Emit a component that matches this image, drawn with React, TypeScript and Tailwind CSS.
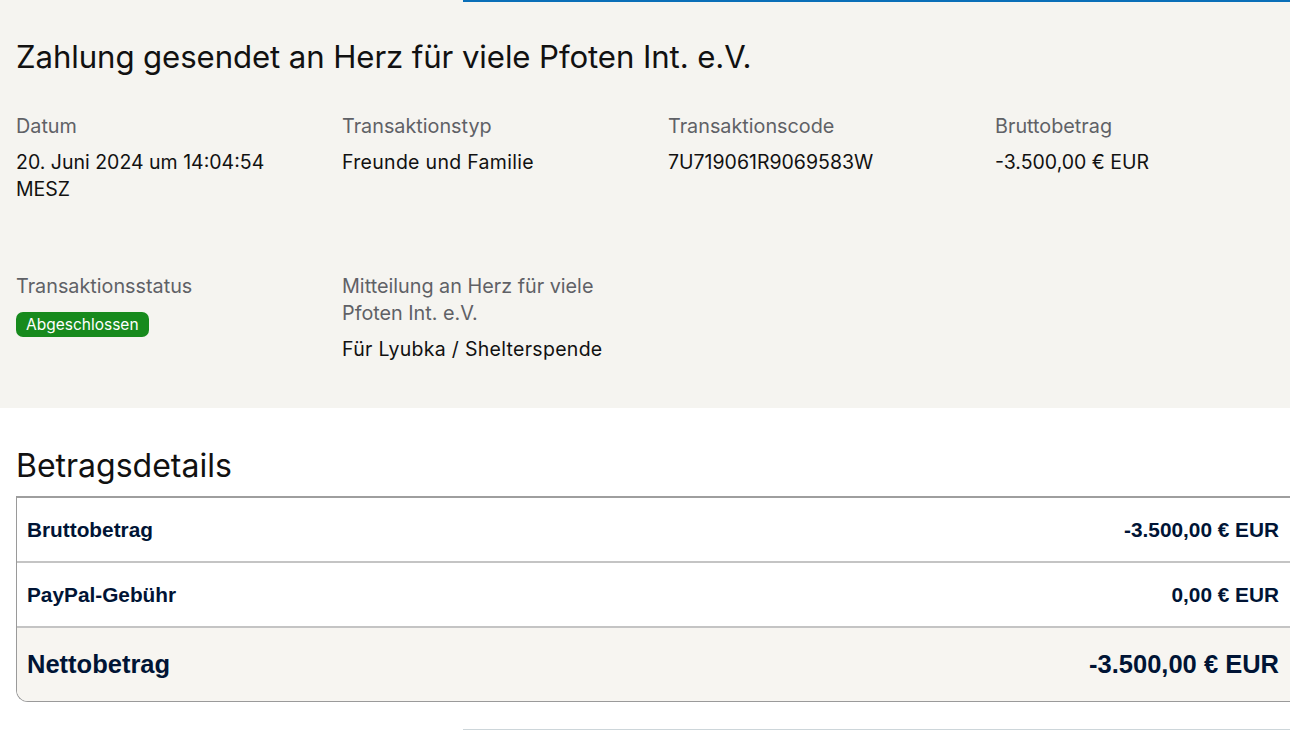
import React from "react";

const sans = { fontFamily: "Inter, 'Liberation Sans', sans-serif" };
const arial = { fontFamily: "'Liberation Sans', Arial, sans-serif" };

function Field({ label, children }: { label: React.ReactNode; children: React.ReactNode }) {
  return (
    <div className="flex flex-col">
      <div className="text-[19.8px] leading-[27px] text-[#5f6166] mb-[9px]">{label}</div>
      <div className="text-[19.5px] leading-[27px] text-[#111111]">{children}</div>
    </div>
  );
}

export default function App() {
  return (
    <div className="w-[1290px] h-[743px] bg-white overflow-hidden flex flex-col" style={sans}>
      <section className="bg-[#f5f4f0] h-[408px] flex flex-col shrink-0">
        <div className="flex h-[2px]">
          <div className="w-[463px]" />
          <div className="flex-1 bg-[#0a6fb8]" />
        </div>
        <div className="px-4 pt-[37px]">
          <h1 className="text-[31.2px] leading-[36px] text-[#111111] font-normal tracking-[-0.1px]">
            Zahlung gesendet an Herz für viele Pfoten Int. e.V.
          </h1>
          <div className="grid grid-cols-[326px_326px_327px_300px] mt-[38px] gap-y-[70px]">
            <Field label="Datum">
              20. Juni 2024 um 14:04:54
              <br />
              MESZ
            </Field>
            <Field label="Transaktionstyp">
              <span className="tracking-[0.3px]">Freunde und Familie</span>
            </Field>
            <Field label="Transaktionscode">7U719061R9069583W</Field>
            <Field label="Bruttobetrag">-3.500,00 € EUR</Field>
            <div className="flex flex-col">
              <div className="text-[19.8px] leading-[27px] text-[#5f6166]">Transaktionsstatus</div>
              <div className="mt-[12px]">
                <span className="inline-block bg-[#178a1d] text-white text-[15.5px] leading-[25px] px-[10px] rounded-[7px]">
                  Abgeschlossen
                </span>
              </div>
            </div>
            <Field
              label={
                <>
                  Mitteilung an Herz für viele
                  <br />
                  Pfoten Int. e.V.
                </>
              }
            >
              <span className="tracking-[0.3px]">Für Lyubka / Shelterspende</span>
            </Field>
          </div>
        </div>
      </section>
      <section className="px-4 pt-[40px]">
        <h2 className="text-[32px] leading-[36px] text-[#111111] font-normal">Betragsdetails</h2>
        <div
          className="mt-[12px] w-[1274px] border-l border-b border-[#9a9a9a] border-t-2 border-t-[#9e9e9e] rounded-bl-[12px] overflow-hidden text-[#001435] font-bold"
          style={arial}
        >
          <div className="h-[65px] flex items-center justify-between pl-[10px] pr-[11px] border-b-2 border-[#c4c4c4] text-[20.8px]">
            <span>Bruttobetrag</span>
            <span>-3.500,00 € EUR</span>
          </div>
          <div className="h-[65px] flex items-center justify-between pl-[10px] pr-[11px] border-b-2 border-[#c4c4c4] text-[20.8px]">
            <span>PayPal-Gebühr</span>
            <span>0,00 € EUR</span>
          </div>
          <div className="h-[73px] flex items-center justify-between pl-[10px] pr-[11px] bg-[#f7f5f1] text-[25.5px]">
            <span>Nettobetrag</span>
            <span>-3.500,00 € EUR</span>
          </div>
        </div>
        <div className="flex mt-[27px] h-px -mx-4">
          <div className="w-[463px]" />
          <div className="flex-1 bg-[#cdd6da]" />
        </div>
      </section>
    </div>
  );
}
